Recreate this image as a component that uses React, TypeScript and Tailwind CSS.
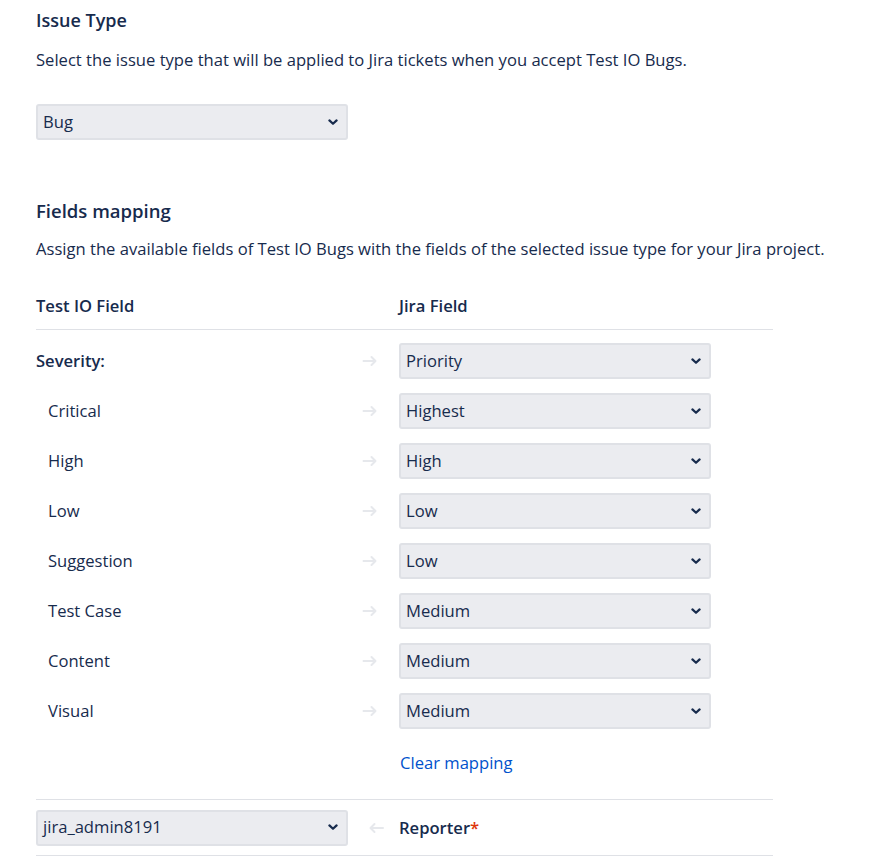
import React from "react";

const font = { fontFamily: '"Open Sans", "Noto Sans", sans-serif' };

function Chevron() {
  return (
    <svg width="10" height="7" viewBox="0 0 10 7" className="shrink-0">
      <path d="M1.4 1.4 L5 4.8 L8.6 1.4" fill="none" stroke="#172B4D" strokeWidth="2.2" strokeLinecap="round" strokeLinejoin="round" />
    </svg>
  );
}

function Select({ value }: { value: string }) {
  return (
    <div className="flex h-[36px] w-[312px] items-center justify-between rounded-[3px] border-2 border-[#DFE1E6] bg-[#EBECF0] pl-[5px] pr-[8px] text-[16.6px] text-[#172B4D]">
      <span>{value}</span>
      <Chevron />
    </div>
  );
}

function ArrowRight() {
  return (
    <svg width="16" height="12" viewBox="0 0 16 12">
      <path d="M1.5 6 H13.5 M9.5 2 L13.5 6 L9.5 10" fill="none" stroke="#E6E8EC" strokeWidth="2" strokeLinecap="round" strokeLinejoin="round" />
    </svg>
  );
}

function ArrowLeft() {
  return (
    <svg width="17" height="12" viewBox="0 0 17 12">
      <path d="M15 6 H2.5 M6.5 2 L2.5 6 L6.5 10" fill="none" stroke="#E6E8EC" strokeWidth="2" strokeLinecap="round" strokeLinejoin="round" />
    </svg>
  );
}

const rows = [
  { label: "Critical", value: "Highest" },
  { label: "High", value: "High" },
  { label: "Low", value: "Low" },
  { label: "Suggestion", value: "Low" },
  { label: "Test Case", value: "Medium" },
  { label: "Content", value: "Medium" },
  { label: "Visual", value: "Medium" },
];

export default function App() {
  return (
    <div className="min-h-[863px] bg-white pl-[36px] text-[#172B4D]" style={font}>
      <div className="flex h-[40px] items-center pt-[1px] text-[18px] font-semibold">Issue Type</div>
      <div className="flex h-[40px] items-center text-[16.6px]">
        Select the issue type that will be applied to Jira tickets when you accept Test IO Bugs.
      </div>
      <div className="pt-[24px]">
        <Select value="Bug" />
      </div>
      <div className="mt-[51px] flex h-[40px] items-center text-[18.5px] font-semibold">Fields mapping</div>
      <div className="flex h-[36px] items-center text-[16.6px]">
        Assign the available fields of Test IO Bugs with the fields of the selected issue type for your Jira project.
      </div>
      <div className="w-[737px]">
        <div className="mt-[23px] flex h-[40px] items-start border-b border-[#DFE1E6] pt-[4px] text-[16.6px] font-semibold leading-[24px]">
          <div className="w-[363px]">Test IO Field</div>
          <div>Jira Field</div>
        </div>
        <div className="pt-[6px]">
          <div className="flex h-[50px] items-center">
            <div className="w-[326px] pt-[1px] text-[16.6px] font-semibold">Severity:</div>
            <div className="flex w-[37px] justify-start"><ArrowRight /></div>
            <Select value="Priority" />
          </div>
          {rows.map((r) => (
            <div key={r.label} className="flex h-[50px] items-center">
              <div className="w-[326px] pl-[12px] pt-[1px] text-[16.6px]">{r.label}</div>
              <div className="flex w-[37px] justify-start"><ArrowRight /></div>
              <Select value={r.value} />
            </div>
          ))}
        </div>
        <div className="flex h-[64px] items-start border-b border-[#DFE1E6] pl-[364px] pt-[15px] leading-[24px]">
          <a className="text-[16.6px] text-[#0052CC]">Clear mapping</a>
        </div>
        <div className="flex h-[56px] items-center border-b border-[#DFE1E6]">
          <Select value="jira_admin8191" />
          <div className="flex w-[51px] justify-center pl-[5px]"><ArrowLeft /></div>
          <div className="pt-[1px] text-[16.6px] font-semibold">
            Reporter<span className="text-[#DE350B]">*</span>
          </div>
        </div>
      </div>
    </div>
  );
}
